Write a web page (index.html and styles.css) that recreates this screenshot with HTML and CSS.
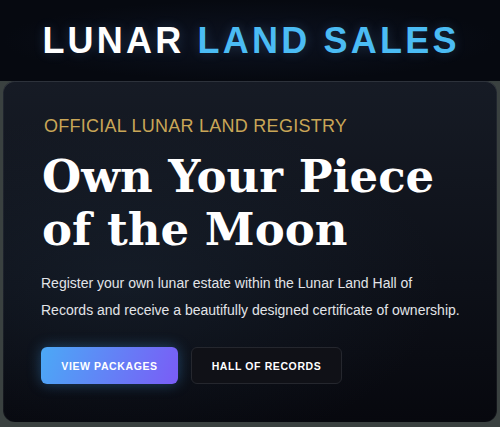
FILE: index.html
```html
<!DOCTYPE html>
<html lang="en">
<head>
    <meta charset="UTF-8">
    <meta name="viewport" content="width=device-width, initial-scale=1.0">
    <title>Lunar Land Sales</title>
    <link rel="stylesheet" href="styles.css">
</head>
<body>
    <header class="site-header">
        <h1 class="logo">LUNAR <span class="logo-accent">LAND SALES</span></h1>
    </header>

    <section class="hero">
        <p class="eyebrow">OFFICIAL LUNAR LAND REGISTRY</p>
        <h2 class="hero-title">Own Your Piece of the Moon</h2>
        <p class="hero-text">Register your own lunar estate within the Lunar Land Hall of Records and receive a beautifully designed certificate of ownership.</p>
        <div class="actions">
            <a class="btn btn-primary" href="#">View Packages</a>
            <a class="btn btn-secondary" href="#">Hall of Records</a>
        </div>
    </section>
</body>
</html>
```

FILE: styles.css
```css
body {
    margin: 0;
    padding: 0;
    font-family: "Liberation Sans", Arial, sans-serif;
    background: #3a4140;
    color: white;
    height: 427px;
    overflow: hidden;
}

.site-header {
    background: radial-gradient(ellipse at center, #0c1220 0%, #060910 70%);
    height: 81px;
    display: flex;
    align-items: center;
    justify-content: center;
}

.logo {
    margin: 0 0 0 2px;
    font-size: 36px;
    font-weight: bold;
    letter-spacing: 3.2px;
    color: #ffffff;
    text-shadow: 0 0 12px rgba(120, 180, 255, 0.2);
}

.logo-accent {
    color: #4bbcf4;
}

.hero {
    margin: 0 3px 0 3px;
    height: 341px;
    box-sizing: border-box;
    padding: 35px 20px 0 38px;
    border-radius: 12px;
    background:
        radial-gradient(ellipse at 25% 60%, rgba(40, 60, 80, 0.25), transparent 60%),
        linear-gradient(180deg, #161b25 0%, #0d1018 60%, #07080e 100%);
    box-shadow: inset 0 1px 0 rgba(255, 255, 255, 0.1), inset 1px 0 0 rgba(255, 255, 255, 0.05), inset -1px 0 0 rgba(255, 255, 255, 0.05);
}

.eyebrow {
    margin: 0 0 0 3px;
    color: #c9a657;
    font-size: 18px;
    letter-spacing: 0.25px;
}

.hero-title {
    margin: 13px 0 0 1px;
    font-family: "DejaVu Serif", Georgia, serif;
    font-weight: bold;
    font-size: 45px;
    line-height: 53px;
    color: #ffffff;
}

.hero-text {
    max-width: 422px;
    margin: 14px 0 0 0;
    font-size: 14px;
    line-height: 27px;
    color: #e2e4e8;
}

.actions {
    display: flex;
    gap: 13px;
    margin-top: 23px;
}

.btn {
    display: inline-flex;
    align-items: center;
    justify-content: center;
    height: 37px;
    box-sizing: border-box;
    border-radius: 6px;
    font-size: 10.5px;
    font-weight: bold;
    letter-spacing: 0.6px;
    text-transform: uppercase;
    text-decoration: none;
    color: white;
}

.btn-primary {
    width: 137px;
    background: linear-gradient(110deg, #4ba9f6 0%, #7a5cf6 100%);
    box-shadow: 0 0 14px rgba(70, 170, 255, 0.35);
}

.btn-secondary {
    width: 151px;
    background: #101117;
    border: 1px solid #25272e;
}
```
